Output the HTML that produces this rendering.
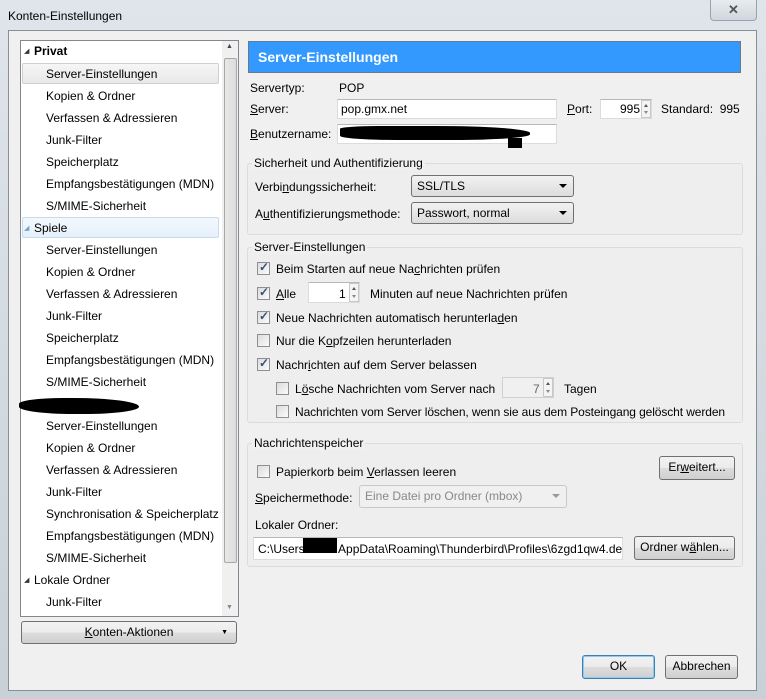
<!DOCTYPE html>
<html><head><meta charset="utf-8"><style>
*{box-sizing:border-box;margin:0;padding:0}
body{width:766px;height:699px;overflow:hidden;background:#cfd6dd;font-family:"Liberation Sans",sans-serif;font-size:12px;color:#000;position:relative}
.a{position:absolute;white-space:nowrap}
.frame{position:absolute;left:0;top:0;width:766px;height:699px;background:linear-gradient(#dfe5ea,#c8d0d8);}
.client{position:absolute;left:8px;top:30px;width:749px;height:661px;background:#f0f0f0;border:1px solid #8a8f96}
.tree{position:absolute;left:20px;top:40px;width:219px;height:577px;background:#fff;border:1px solid #828790}
.sb{position:absolute;left:222px;top:41px;width:16px;height:575px;background:#f0f0f0}
.thumb{position:absolute;left:224px;top:58px;width:13px;height:505px;background:linear-gradient(90deg,#e8e8e8,#dcdcdc);border:1px solid #a8a8a8;border-radius:2px}
.it{position:absolute;left:46px;font-size:12px}
.hd{position:absolute;left:34px;font-size:12px}
.tri{position:absolute;left:24px;font-size:7px;color:#333}
.sel{position:absolute;left:22px;width:197px;height:21px;border:1px solid #d0d0d0;border-radius:2px;background:linear-gradient(#f6f6f6,#e8e8e8)}
.inp{position:absolute;background:#fff;border:1px solid #dcdcdc;border-top-color:#b8b8b8}
.btn{position:absolute;border:1px solid #707070;border-radius:3px;background:linear-gradient(#f2f2f2 0%,#ebebeb 50%,#dddddd 51%,#cfcfcf 100%);text-align:center;line-height:21px}
.grp{position:absolute;border:1px solid #dcdcdc;border-radius:3px;background:#eeeeee}
.gl{position:absolute;background:#f0f0f0;padding:0 2px}
.cb{position:absolute;width:13px;height:13px;border:1px solid #8e8f8f;background:linear-gradient(135deg,#dcdcdc,#fbfbfb)}
.cb.c::after{content:"✓";position:absolute;left:1px;top:-3px;font-size:12px;color:#3a4f7a;font-weight:bold}
.sel2{position:absolute;border:1px solid #707070;border-radius:3px;background:linear-gradient(#f2f2f2,#dcdcdc);padding-left:5px;line-height:20px}
.arr{position:absolute;right:6px;top:8px;width:0;height:0;border-left:4px solid transparent;border-right:4px solid transparent;border-top:4px solid #000}
.spin{position:absolute;width:10px;background:#f4f4f4;border:1px solid #c8c8c8}
.spin::before{content:"";position:absolute;left:2px;top:3px;border-left:2px solid transparent;border-right:2px solid transparent;border-bottom:3px solid #555}
.spin::after{content:"";position:absolute;left:2px;bottom:3px;border-left:2px solid transparent;border-right:2px solid transparent;border-top:3px solid #888}
u{text-decoration:underline}
</style></head><body>
<div class="frame"></div>
<div class="a" style="left:8px;top:9px;font-size:12px">Konten-Einstellungen</div>
<div class="a" style="left:710px;top:0px;width:47px;height:21px;border:1px solid #9aa3ad;border-top:none;border-radius:0 0 4px 4px;background:linear-gradient(#e8ecf0,#d0d6dc);text-align:center;font-weight:bold;color:#555;font-size:13px;line-height:20px">✕</div>
<div class="client"></div>

<div class="tree"></div>
<div class="sb"></div>
<div class="thumb"></div>
<div class="a" style="left:226px;top:43px;font-size:7px;color:#444">▲</div>
<div class="a" style="left:226px;top:604px;font-size:7px;color:#888">▼</div>
<div class="sel" style="top:63px"></div>
<div class="sel" style="top:217px;border-color:#c4dcef;background:linear-gradient(#f3f8fd,#e6f0fa)"></div>
<div class="tri" style="top:47px">◢</div><div class="hd" style="top:44px;font-weight:bold">Privat</div>
<div class="it" style="top:67px">Server-Einstellungen</div>
<div class="it" style="top:89px">Kopien &amp; Ordner</div>
<div class="it" style="top:111px">Verfassen &amp; Adressieren</div>
<div class="it" style="top:133px">Junk-Filter</div>
<div class="it" style="top:155px">Speicherplatz</div>
<div class="it" style="top:177px">Empfangsbestätigungen (MDN)</div>
<div class="it" style="top:199px">S/MIME-Sicherheit</div>
<div class="tri" style="top:224px;color:#6aa8d8">◢</div><div class="hd" style="top:221px">Spiele</div>
<div class="it" style="top:243px">Server-Einstellungen</div>
<div class="it" style="top:265px">Kopien &amp; Ordner</div>
<div class="it" style="top:287px">Verfassen &amp; Adressieren</div>
<div class="it" style="top:309px">Junk-Filter</div>
<div class="it" style="top:331px">Speicherplatz</div>
<div class="it" style="top:353px">Empfangsbestätigungen (MDN)</div>
<div class="it" style="top:375px">S/MIME-Sicherheit</div>
<div class="a" style="left:19px;top:398px;width:120px;height:16px;background:#000;border-radius:40% 60% 50% 50%"></div>
<div class="it" style="top:419px">Server-Einstellungen</div>
<div class="it" style="top:441px">Kopien &amp; Ordner</div>
<div class="it" style="top:463px">Verfassen &amp; Adressieren</div>
<div class="it" style="top:485px">Junk-Filter</div>
<div class="it" style="top:507px">Synchronisation &amp; Speicherplatz</div>
<div class="it" style="top:529px">Empfangsbestätigungen (MDN)</div>
<div class="it" style="top:551px">S/MIME-Sicherheit</div>
<div class="tri" style="top:576px">◢</div><div class="hd" style="top:573px">Lokale Ordner</div>
<div class="it" style="top:595px">Junk-Filter</div>
<div class="btn" style="left:21px;top:621px;width:216px;height:23px"><u>K</u>onten-Aktionen<span style="position:absolute;right:8px;top:0;font-size:7px">▼</span></div>

<div class="a" style="left:248px;top:41px;width:493px;height:32px;background:#3399ff;border:1px solid #6a7a8a;color:#fff;font-weight:bold;font-size:14px;line-height:30px;padding-left:9px">Server-Einstellungen</div>
<div class="a" style="left:250px;top:81px">Servertyp:</div><div class="a" style="left:339px;top:81px">POP</div>
<div class="a" style="left:250px;top:102px"><u>S</u>erver:</div>
<div class="inp" style="left:337px;top:99px;width:220px;height:20px"></div><div class="a" style="left:341px;top:102px">pop.gmx.net</div>
<div class="a" style="left:567px;top:102px"><u>P</u>ort:</div>
<div class="inp" style="left:600px;top:99px;width:52px;height:20px"></div><div class="a" style="left:620px;top:102px">995</div>
<div class="spin" style="left:641px;top:100px;height:18px"></div>
<div class="a" style="left:661px;top:102px">Standard:&nbsp;&nbsp;995</div>
<div class="a" style="left:250px;top:127px"><u>B</u>enutzername:</div>
<div class="inp" style="left:337px;top:124px;width:220px;height:20px"></div>
<div class="a" style="left:340px;top:126px;width:190px;height:14px;background:#000;border-radius:20% 50% 40% 30%"></div>
<div class="a" style="left:508px;top:138px;width:14px;height:10px;background:#000"></div>

<div class="grp" style="left:247px;top:163px;width:496px;height:72px"></div>
<div class="gl" style="left:252px;top:156px">Sicherheit und Authentifizierung</div>
<div class="a" style="left:255px;top:180px">Verbi<u>n</u>dungssicherheit:</div>
<div class="sel2" style="left:411px;top:175px;width:163px;height:22px">SSL/TLS<div class="arr"></div></div>
<div class="a" style="left:255px;top:207px">A<u>u</u>thentifizierungsmethode:</div>
<div class="sel2" style="left:411px;top:202px;width:163px;height:22px">Passwort, normal<div class="arr"></div></div>

<div class="grp" style="left:247px;top:247px;width:496px;height:176px"></div>
<div class="gl" style="left:252px;top:240px">Server-Einstellungen</div>
<div class="cb c" style="left:257px;top:262px"></div><div class="a" style="left:276px;top:262px">Beim Starten auf neue Na<u>c</u>hrichten prüfen</div>
<div class="cb c" style="left:257px;top:287px"></div><div class="a" style="left:276px;top:287px"><u>A</u>lle</div>
<div class="inp" style="left:308px;top:282px;width:52px;height:21px"></div><div class="a" style="left:339px;top:287px">1</div>
<div class="spin" style="left:349px;top:283px;height:19px"></div>
<div class="a" style="left:370px;top:287px">Minuten auf neue Nachrichten prüfen</div>
<div class="cb c" style="left:257px;top:311px"></div><div class="a" style="left:276px;top:311px">Neue Nachrichten automatisch herunterla<u>d</u>en</div>
<div class="cb" style="left:257px;top:334px"></div><div class="a" style="left:276px;top:334px">Nur die K<u>o</u>pfzeilen herunterladen</div>
<div class="cb c" style="left:257px;top:358px"></div><div class="a" style="left:276px;top:358px">Nachr<u>i</u>chten auf dem Server belassen</div>
<div class="cb" style="left:276px;top:382px"></div><div class="a" style="left:295px;top:382px">L<u>ö</u>sche Nachrichten vom Server nach</div>
<div class="inp" style="left:502px;top:377px;width:52px;height:21px;background:#f0f0f0;border-color:#d0d0d0"></div><div class="a" style="left:533px;top:382px;color:#666">7</div>
<div class="spin" style="left:543px;top:378px;height:19px"></div>
<div class="a" style="left:564px;top:382px">Tagen</div>
<div class="cb" style="left:276px;top:405px"></div><div class="a" style="left:295px;top:405px;letter-spacing:-0.1px">Nachrichten vom Server löschen, wenn sie aus dem Postein<u>g</u>ang gelöscht werden</div>

<div class="grp" style="left:247px;top:443px;width:496px;height:124px"></div>
<div class="gl" style="left:252px;top:436px">Nachrichtenspeicher</div>
<div class="cb" style="left:257px;top:465px"></div><div class="a" style="left:276px;top:465px">Papierkorb beim <u>V</u>erlassen leeren</div>
<div class="btn" style="left:659px;top:456px;width:76px;height:24px">Er<u>w</u>eitert...</div>
<div class="a" style="left:255px;top:491px"><u>S</u>peichermethode:</div>
<div class="a" style="left:359px;top:485px;width:208px;height:23px;border:1px solid #c8c8c8;border-radius:3px;background:#f0f0f0;color:#888;padding-left:5px;line-height:21px">Eine Datei pro Ordner (mbox)<span style="position:absolute;right:6px;top:8px;border-left:4px solid transparent;border-right:4px solid transparent;border-top:4px solid #999"></span></div>
<div class="a" style="left:255px;top:518px">Lokaler Ordner:</div>
<div class="inp" style="left:253px;top:537px;width:370px;height:23px"></div>
<div class="a" style="left:258px;top:542px">C:\Users\<span style="display:inline-block;width:30px"></span>AppData\Roaming\Thunderbird\Profiles\6zgd1qw4.de</div>
<div class="a" style="left:303px;top:538px;width:34px;height:15px;background:#000"></div>
<div class="btn" style="left:634px;top:536px;width:101px;height:24px">Ordner w<u>ä</u>hlen...</div>

<div class="btn" style="left:582px;top:655px;width:73px;height:24px;border-color:#3c7fb1;box-shadow:inset 0 0 0 1px #8ecbf0">OK</div>
<div class="btn" style="left:665px;top:655px;width:73px;height:24px">Abbrechen</div>
</body></html>
